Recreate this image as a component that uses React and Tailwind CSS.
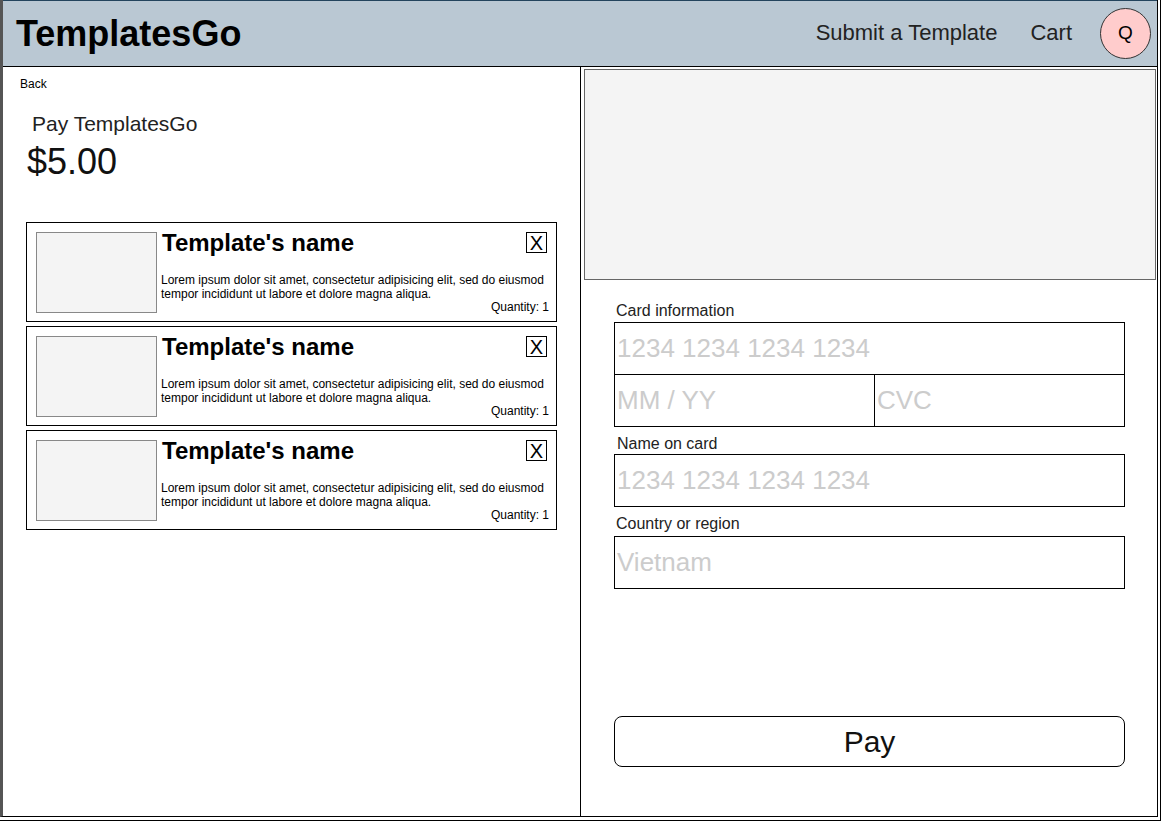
import React from 'react';

const items = [1, 2, 3];

const CartItem = () => (
  <div className="flex h-[100px] w-[531px] border border-black pl-[9px] pt-[9px] pr-[7px]">
    <div className="h-[81px] w-[121px] shrink-0 border border-[#888] bg-[#f4f4f4]"></div>
    <div className="ml-[4px] flex w-[388px] flex-col">
      <div className="flex h-[22px] items-start justify-between">
        <span className="pl-[1px] text-[24px] font-bold leading-[22px]">Template's name</span>
        <div className="mr-[2px] flex h-[21px] w-[21px] items-center justify-center border border-black text-[20px] leading-none">
          X
        </div>
      </div>
      <p className="mt-[19px] text-[12px] leading-[14px]">
        Lorem ipsum dolor sit amet, consectetur adipisicing elit, sed do eiusmod tempor incididunt ut labore et dolore magna aliqua.
      </p>
      <div className="-mt-px text-right text-[12px] leading-[14px]">Quantity: 1</div>
    </div>
  </div>
);

const Field = ({ text, className = '' }) => (
  <div className={`flex h-[53px] items-center border border-black pl-[2px] text-[26px] text-[#cccccc] ${className}`}>
    {text}
  </div>
);

export default function App() {
  return (
    <div className="h-[822px] w-[1161px] bg-white" style={{ fontFamily: '"Liberation Sans", Arial, sans-serif' }}>
      <div className="h-[821px] w-[1161px] border-r border-b border-black">
        <div className="flex h-[817px] w-[1158px] flex-col border-l-[3px] border-r border-b border-l-[#555] border-r-black border-b-black">
          {/* header */}
          <header className="flex h-[67px] shrink-0 items-center border-t border-b border-t-[#23445d] border-b-black bg-[#bac8d3] pl-[13px] pr-[6px]">
            <h1 className="text-[36px] font-bold leading-none text-black">TemplatesGo</h1>
            <nav className="ml-auto flex items-center text-[22px] text-[#222]">
              <span className="-mt-[2px]">Submit a Template</span>
              <span className="-mt-[2px] ml-[33px]">Cart</span>
              <div className="ml-[28px] flex h-[51px] w-[51px] items-center justify-center rounded-full border border-[#333] bg-[#ffcccc] text-[19px] text-black">
                Q
              </div>
            </nav>
          </header>

          <main className="flex flex-1">
            {/* left column */}
            <section className="w-[578px] shrink-0 border-r border-black pl-[17px] pt-[10px] text-black">
              <div className="text-[12px] leading-[15px]">Back</div>
              <div className="ml-[12px] mt-[20px] text-[21px] leading-[24px] text-[#222]">Pay TemplatesGo</div>
              <div className="ml-[7px] mt-[6px] text-[36px] leading-[40px] text-[#111]">$5.00</div>
              <div className="ml-[6px] mt-[40px] flex flex-col gap-[4px]">
                {items.map((i) => (
                  <CartItem key={i} />
                ))}
              </div>
            </section>

            {/* right column */}
            <section className="flex-1">
              <div className="ml-[3px] mt-[2px] h-[211px] w-[572px] border border-[#666] bg-[#f4f4f4]"></div>
              <div className="ml-[33px] w-[511px] text-[16px] text-[#222]">
                <div className="ml-[2px] mt-[22px] leading-[18px]">Card information</div>
                <div className="mt-[2px]">
                  <Field text="1234 1234 1234 1234" />
                  <div className="-mt-px flex">
                    <Field text="MM / YY" className="w-[261px]" />
                    <Field text="CVC" className="-ml-px flex-1" />
                  </div>
                </div>
                <div className="ml-[3px] mt-[8px] leading-[18px]">Name on card</div>
                <Field text="1234 1234 1234 1234" className="mt-[1px]" />
                <div className="ml-[2px] mt-[8px] leading-[18px]">Country or region</div>
                <Field text="Vietnam" className="mt-[3px]" />
                <button className="mt-[127px] flex h-[51px] w-[511px] items-center justify-center rounded-[8px] border border-black text-[30px] text-[#111]">
                  Pay
                </button>
              </div>
            </section>
          </main>
        </div>
      </div>
    </div>
  );
}
